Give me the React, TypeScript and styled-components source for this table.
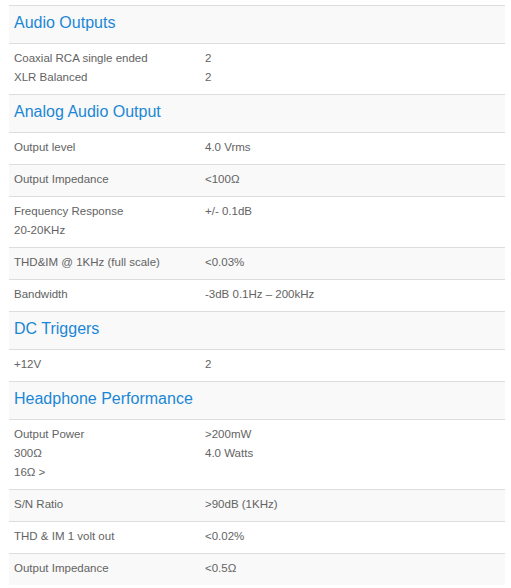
import React from "react";
import styled, { createGlobalStyle } from "styled-components";

const Global = createGlobalStyle`
  html, body { margin: 0; padding: 0; background: #ffffff; }
  body { font-family: "Liberation Sans", Arial, sans-serif; }
`;

const Page = styled.div`
  padding: 5px 6px 0 9px;
`;

const Table = styled.table`
  width: 100%;
  border-collapse: collapse;
  border-spacing: 0;
  table-layout: fixed;
`;

const LabelCol = styled.col`
  width: 191px;
`;

const Row = styled.tr<{ $striped: boolean }>`
  background: ${(p) => (p.$striped ? "#f9f9f9" : "#ffffff")};
  border-top: 1px solid #dddddd;
`;

const Cell = styled.td`
  padding: 5px 5px 7px;
  vertical-align: top;
  font-size: 11.5px;
  line-height: 19px;
  color: #636363;
`;

const Heading = styled.th`
  padding: 4px 5px 8px;
  text-align: left;
  font-weight: normal;
  font-size: 16px;
  line-height: 25px;
  color: #1b87d6;
`;

type Item =
  | { kind: "h"; title: string }
  | { kind: "r"; label: string[]; value: string[] };

const data: Item[] = [
  { kind: "h", title: "Audio Outputs" },
  { kind: "r", label: ["Coaxial RCA single ended", "XLR Balanced"], value: ["2", "2"] },
  { kind: "h", title: "Analog Audio Output" },
  { kind: "r", label: ["Output level"], value: ["4.0 Vrms"] },
  { kind: "r", label: ["Output Impedance"], value: ["<100Ω"] },
  { kind: "r", label: ["Frequency Response", "20-20KHz"], value: ["+/- 0.1dB"] },
  { kind: "r", label: ["THD&IM @ 1KHz (full scale)"], value: ["<0.03%"] },
  { kind: "r", label: ["Bandwidth"], value: ["-3dB 0.1Hz – 200kHz"] },
  { kind: "h", title: "DC Triggers" },
  { kind: "r", label: ["+12V"], value: ["2"] },
  { kind: "h", title: "Headphone Performance" },
  { kind: "r", label: ["Output Power", "300Ω", "16Ω >"], value: [">200mW", "4.0 Watts"] },
  { kind: "r", label: ["S/N Ratio"], value: [">90dB (1KHz)"] },
  { kind: "r", label: ["THD & IM 1 volt out"], value: ["<0.02%"] },
  { kind: "r", label: ["Output Impedance"], value: ["<0.5Ω"] },
];

const Lines = ({ lines }: { lines: string[] }) => (
  <>
    {lines.map((l, i) => (
      <React.Fragment key={i}>
        {i > 0 && <br />}
        {l}
      </React.Fragment>
    ))}
  </>
);

export default function App() {
  return (
    <>
      <Global />
      <Page>
        <Table>
          <colgroup>
            <LabelCol />
            <col />
          </colgroup>
          <tbody>
            {data.map((item, i) =>
              item.kind === "h" ? (
                <Row key={i} $striped={i % 2 === 0}>
                  <Heading colSpan={2}>{item.title}</Heading>
                </Row>
              ) : (
                <Row key={i} $striped={i % 2 === 0}>
                  <Cell>
                    <Lines lines={item.label} />
                  </Cell>
                  <Cell>
                    <Lines lines={item.value} />
                  </Cell>
                </Row>
              )
            )}
          </tbody>
        </Table>
      </Page>
    </>
  );
}
